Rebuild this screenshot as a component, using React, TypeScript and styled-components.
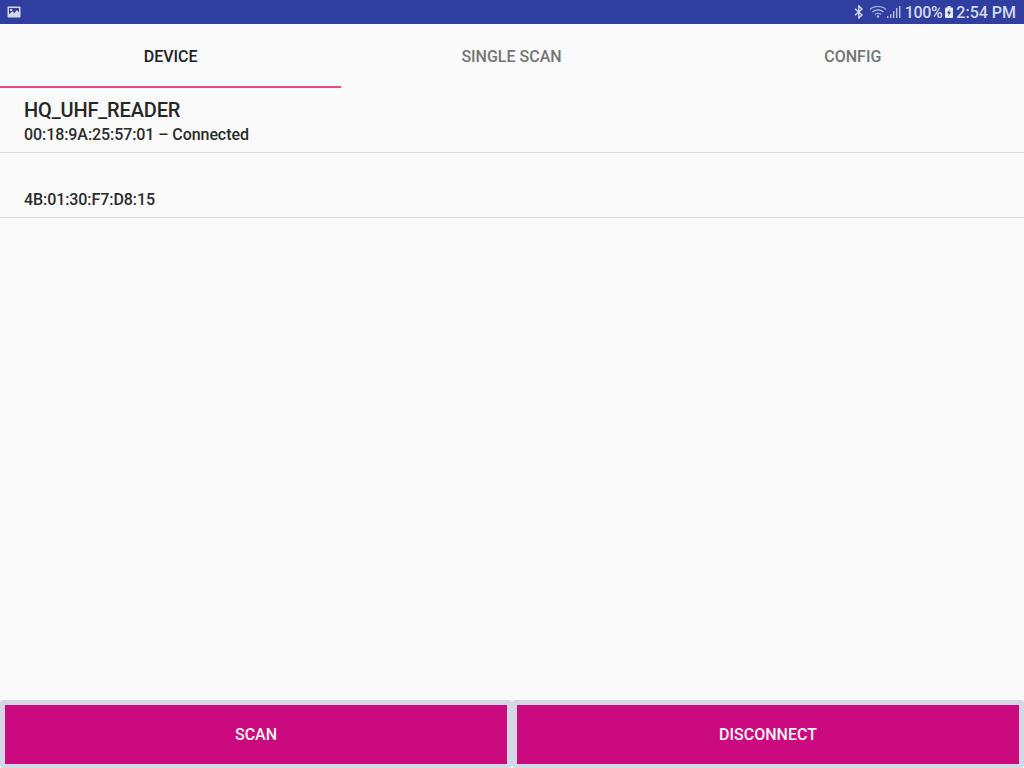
import React from 'react'
import styled, { createGlobalStyle } from 'styled-components'

const GlobalStyle = createGlobalStyle`
	html, body {
		margin: 0;
		padding: 0;
		height: 100%;
		background: #fafafa;
		font-family: Roboto, 'Liberation Sans', sans-serif;
	}
	#root {
		height: 100%;
	}
`

const tabs = ['DEVICE', 'SINGLE SCAN', 'CONFIG']

const devices = [
	{ name: 'HQ_UHF_READER', detail: '00:18:9A:25:57:01 – Connected' },
	{ name: '', detail: '4B:01:30:F7:D8:15' },
]

const App = () => (
	<Screen>
		<GlobalStyle />
		<StatusBar>
			<PictureIcon viewBox="0 0 14 12">
				<rect x="0.5" y="0.5" width="13" height="11" rx="1" fill="#d5d8ec" />
				<rect x="2" y="2" width="10" height="6" fill="#303f9f" />
				<circle cx="4.2" cy="4" r="1.2" fill="#d5d8ec" />
				<path d="M2 8 L5.5 5.5 L7.5 7 L10 4 L12 6.5 V8 Z" fill="#d5d8ec" />
			</PictureIcon>
			<StatusRight>
				<StatusIcon width="10" height="14" viewBox="0 0 10 14">
					<path
						d="M1 3.8 L8 10 L4.8 13 V1 L8 4 L1 10.2"
						fill="none"
						stroke="#d5d8ec"
						strokeWidth="1.4"
					/>
				</StatusIcon>
				<WifiSignal width="32" height="14" viewBox="0 0 32 14">
					<g fill="none" stroke="#b9bedf" strokeWidth="1.2">
						<path d="M1 4.5 C5 0.5 13 0.5 17 4.5" />
						<path d="M3.5 7 C6.5 4.2 11.5 4.2 14.5 7" />
						<path d="M6 9.5 C7.8 8 10.2 8 12 9.5" />
					</g>
					<circle cx="9" cy="11.5" r="1.2" fill="#b9bedf" />
					<g fill="#b9bedf">
						<rect x="18" y="11" width="1.4" height="2" />
						<rect x="21" y="9" width="1.4" height="4" />
						<rect x="24" y="6" width="1.4" height="7" />
						<rect x="27" y="3" width="1.4" height="10" />
						<rect x="30" y="1" width="1.4" height="12" />
					</g>
				</WifiSignal>
				<Percent>100%</Percent>
				<BatteryIcon width="8" height="12" viewBox="0 0 8 12">
					<rect x="2.5" y="0" width="3" height="2" fill="#e8eaf6" />
					<rect x="0" y="1.5" width="8" height="10.5" rx="1" fill="#e8eaf6" />
					<path d="M4.8 3 L2 7.2 H3.8 L3.2 10.5 L6 6 H4.2 Z" fill="#303f9f" />
				</BatteryIcon>
				<Clock>2:54 PM</Clock>
			</StatusRight>
		</StatusBar>
		<TabBar>
			{tabs.map((tab, i) => (
				<Tab key={tab} $active={i === 0}>
					{tab}
				</Tab>
			))}
		</TabBar>
		<DeviceList>
			{devices.map((device) => (
				<DeviceRow key={device.detail}>
					<DeviceName>{device.name}</DeviceName>
					<DeviceDetail>{device.detail}</DeviceDetail>
				</DeviceRow>
			))}
		</DeviceList>
		<ButtonBar>
			<ActionButton>SCAN</ActionButton>
			<ActionButton>DISCONNECT</ActionButton>
		</ButtonBar>
	</Screen>
)

const Screen = styled.div`
	display: flex;
	flex-direction: column;
	height: 768px;
	overflow: hidden;
	background: #fafafa;
`

const StatusBar = styled.div`
	display: flex;
	align-items: center;
	justify-content: space-between;
	flex: 0 0 24px;
	padding: 0 8px 0 7px;
	background: #303f9f;
`

const PictureIcon = styled.svg`
	width: 14px;
	height: 12px;
`

const StatusRight = styled.div`
	display: flex;
	align-items: center;
	color: #d5d8ec;
	font-size: 16px;
	font-weight: 500;
`

const StatusIcon = styled.svg`
	display: block;
`

const WifiSignal = styled.svg`
	display: block;
	margin-left: 5px;
`

const Percent = styled.span`
	margin-left: 4px;
	letter-spacing: -0.4px;
`

const BatteryIcon = styled.svg`
	display: block;
	margin-left: 3px;
`

const Clock = styled.span`
	margin-left: 3px;
`

const TabBar = styled.div`
	display: grid;
	grid-template-columns: repeat(3, 1fr);
	flex: 0 0 64px;
`

const Tab = styled.div<{ $active: boolean }>`
	display: flex;
	align-items: center;
	justify-content: center;
	box-sizing: border-box;
	padding: ${(props) => (props.$active ? '2px 0 0' : '0 1px 0 0')};
	font-size: 16px;
	font-weight: 500;
	color: ${(props) => (props.$active ? '#212121' : '#757575')};
	border-bottom: ${(props) => (props.$active ? '2px solid #e64c7e' : 'none')};
`

const DeviceList = styled.div`
	flex: 1;
`

const DeviceRow = styled.div`
	box-sizing: border-box;
	height: 65px;
	padding: 10px 24px 0;
	border-bottom: 1px solid #dcdcdc;
`

const DeviceName = styled.div`
	height: 24px;
	line-height: 24px;
	font-size: 20px;
	font-weight: 500;
	letter-spacing: -0.15px;
	color: #262626;
`

const DeviceDetail = styled.div`
	margin-top: 3px;
	line-height: 20px;
	font-size: 16px;
	font-weight: 500;
	letter-spacing: -0.08px;
	color: #2b2b2b;
`

const ButtonBar = styled.div`
	display: grid;
	grid-template-columns: 1fr 1fr;
	flex: 0 0 68px;
`

const ActionButton = styled.button`
	box-sizing: border-box;
	margin: 0;
	padding: 0;
	border: solid #d6d7e4;
	border-width: 5px 5px 4px;
	border-radius: 3px;
	background: #cc0a80;
	color: #f5f5f5;
	font-family: inherit;
	font-size: 16px;
	font-weight: 500;
`

export default App
